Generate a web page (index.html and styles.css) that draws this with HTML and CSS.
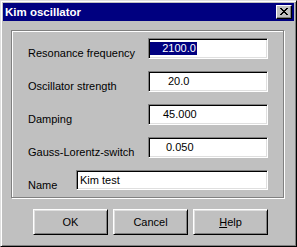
FILE: index.html
```html
<!DOCTYPE html>
<html>
<head>
<meta charset="utf-8">
<link rel="stylesheet" href="styles.css">
</head>
<body>
<div class="window">
  <div class="titlebar">
    <span class="title">Kim oscillator</span>
    <button class="close" type="button" aria-label="Close">
      <svg width="8" height="7" viewBox="0 0 8 7" shape-rendering="crispEdges">
        <path d="M0 0h2v1h-2z M6 0h2v1h-2z M1 1h2v1h-2z M5 1h2v1h-2z M2 2h4v1h-4z M3 3h2v1h-2z M2 4h4v1h-4z M1 5h2v1h-2z M5 5h2v1h-2z M0 6h2v1h-2z M6 6h2v1h-2z" fill="#000"/>
      </svg>
    </button>
  </div>
  <div class="body">
    <div class="group">
      <div class="row">
        <span class="lbl">Resonance frequency</span>
        <div class="field num"><span class="sel">&nbsp;&nbsp;&nbsp;&nbsp;2100.0</span></div>
      </div>
      <div class="row">
        <span class="lbl">Oscillator strength</span>
        <div class="field num"><span class="val v2">20.0</span></div>
      </div>
      <div class="row">
        <span class="lbl">Damping</span>
        <div class="field num"><span class="val v3">45.000</span></div>
      </div>
      <div class="row">
        <span class="lbl">Gauss-Lorentz-switch</span>
        <div class="field num"><span class="val v4">0.050</span></div>
      </div>
      <div class="row name">
        <span class="lbl">Name</span>
        <div class="field wide"><span class="val v5">Kim test</span></div>
      </div>
    </div>
    <div class="buttons">
      <button class="btn" type="button">OK</button>
      <button class="btn" type="button">Cancel</button>
      <button class="btn" type="button"><u>H</u>elp</button>
    </div>
  </div>
</div>
</body>
</html>
```
FILE: styles.css
```css
html, body {
  margin: 0;
  padding: 0;
  background: #c0c0c0;
}
.window {
  box-sizing: border-box;
  width: 297px;
  height: 247px;
  background: #c0c0c0;
  border-style: solid;
  border-width: 1px;
  border-color: #dfdfdf #000 #000 #dfdfdf;
  box-shadow: inset 1px 1px 0 #fff, inset -1px -1px 0 #808080;
  padding: 2px;
  display: flex;
  flex-direction: column;
  font-family: "Liberation Sans", Arial, sans-serif;
  font-size: 11px;
  color: #000;
}
.titlebar {
  height: 18px;
  background: #000080;
  display: flex;
  align-items: center;
  justify-content: space-between;
  padding: 0 2px 0 2px;
}
.title {
  color: #fff;
  font-weight: bold;
  font-size: 11.5px;
  line-height: 14px;
}
.close {
  box-sizing: border-box;
  width: 16px;
  height: 14px;
  padding: 0;
  margin: 0;
  background: #c0c0c0;
  border-style: solid;
  border-width: 1px;
  border-color: #fff #000 #000 #fff;
  box-shadow: inset -1px -1px 0 #808080;
  display: flex;
  align-items: center;
  justify-content: center;
}
.close svg {
  display: block;
  margin: 0 1px 1px 0;
}
.body {
  display: flex;
  flex-direction: column;
  padding: 9px 0 0 8px;
}
.group {
  box-sizing: border-box;
  width: 273px;
  height: 168px;
  border: 1px solid #808080;
  box-shadow: inset 1px 1px 0 #fff, 1px 1px 0 #fff;
  padding: 7px 14px 0 16px;
  display: flex;
  flex-direction: column;
  gap: 11px;
}
.row {
  display: flex;
  align-items: flex-start;
}
.lbl {
  width: 120px;
  padding-top: 9px;
  line-height: 13px;
  white-space: nowrap;
}
.row.name .lbl {
  width: 48px;
}
.field {
  box-sizing: border-box;
  height: 21px;
  background: #fff;
  border-style: solid;
  border-width: 1px;
  border-color: #808080 #fff #fff #808080;
  box-shadow: inset 1px 1px 0 #000, inset -1px -1px 0 #dfdfdf;
  display: flex;
  align-items: center;
  line-height: 13px;
  white-space: pre;
}
.field.num {
  width: 120px;
}
.field.wide {
  width: 192px;
  height: 20px;
}
.sel {
  background: #000080;
  color: #fff;
  margin-left: 1px;
  padding-right: 1px;
}
.val.v2 { padding-left: 19px; }
.val.v3 { padding-left: 14px; }
.val.v4 { padding-left: 17px; }
.val.v5 { padding-left: 3px; }
.buttons {
  display: flex;
  gap: 5px;
  margin: 11px 0 0 22px;
}
.btn {
  box-sizing: border-box;
  width: 75px;
  height: 26px;
  padding: 0;
  margin: 0;
  background: #c0c0c0;
  font-family: "Liberation Sans", Arial, sans-serif;
  font-size: 11px;
  color: #000;
  border-style: solid;
  border-width: 1px;
  border-color: #fff #000 #000 #fff;
  box-shadow: inset 1px 1px 0 #dfdfdf, inset -1px -1px 0 #808080;
}
```
